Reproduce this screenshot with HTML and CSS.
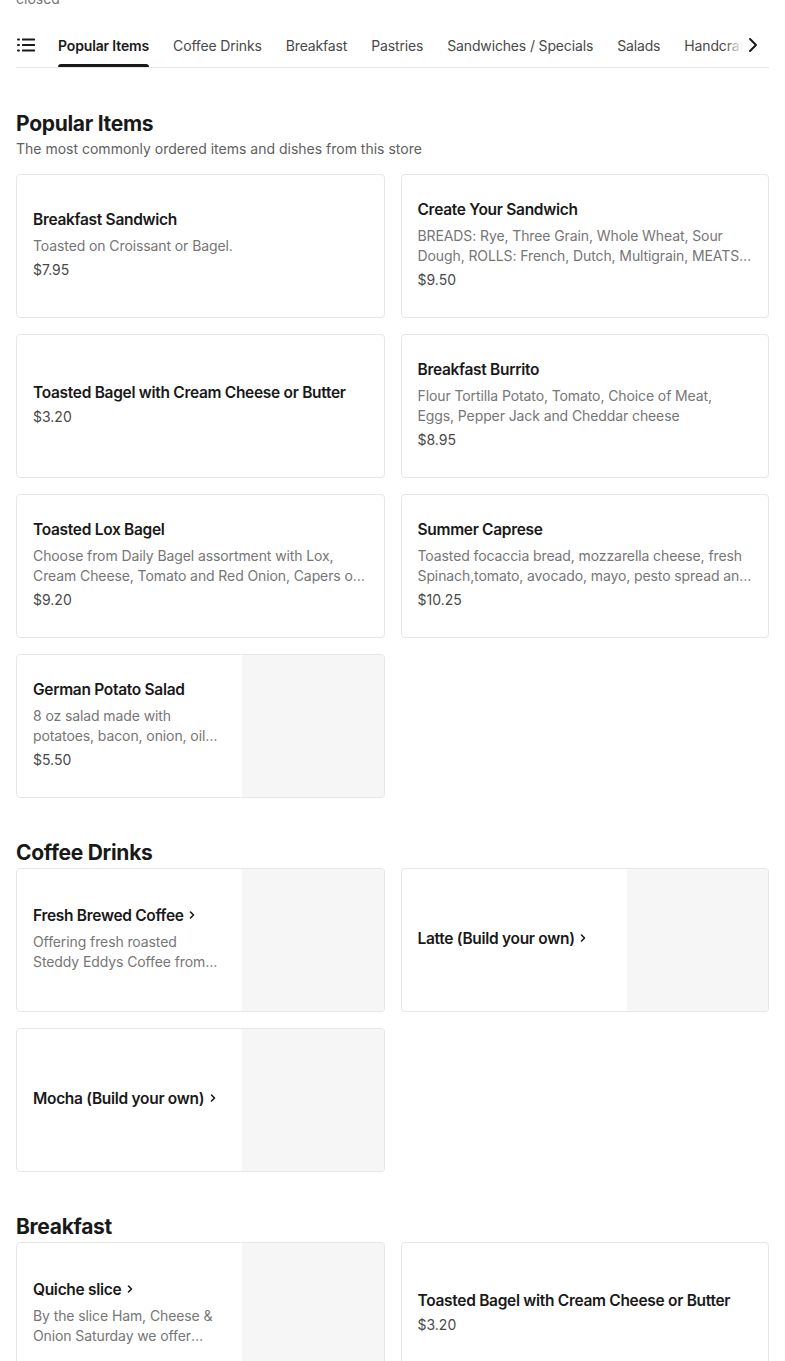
FILE: index.html
```html
<!DOCTYPE html>
<html>
<head>
<meta charset="utf-8">
<link rel="stylesheet" href="styles.css">
</head>
<body>
<div class="page">
  <div class="status">closed</div>
  <nav class="tabbar">
    <span class="menu-icon">
      <svg width="20" height="20" viewBox="0 0 20 20"><g fill="#191919"><rect x="1" y="3.5" width="3" height="2" rx="1"/><rect x="1" y="9" width="3" height="2" rx="1"/><rect x="1" y="14.5" width="3" height="2" rx="1"/><rect x="6" y="3.5" width="13" height="2" rx="0.5"/><rect x="6" y="9" width="13" height="2" rx="0.5"/><rect x="6" y="14.5" width="13" height="2" rx="0.5"/></g></svg>
    </span>
    <div class="tabs">
      <span class="tab active">Popular Items</span>
      <span class="tab">Coffee Drinks</span>
      <span class="tab">Breakfast</span>
      <span class="tab">Pastries</span>
      <span class="tab">Sandwiches / Specials</span>
      <span class="tab">Salads</span>
      <span class="tab">Handcrafted Drinks</span>
    </div>
    <span class="tab-next">
      <svg width="14" height="16" viewBox="0 0 14 16"><path d="M4 2 L10 8 L4 14" fill="none" stroke="#191919" stroke-width="2" stroke-linecap="round" stroke-linejoin="round"/></svg>
    </span>
  </nav>

  <section class="section first">
    <h2 class="section-title">Popular Items</h2>
    <p class="section-sub">The most commonly ordered items and dishes from this store</p>
    <div class="grid">
      <div class="card"><div class="info">
        <div class="title">Breakfast Sandwich</div>
        <div class="desc">Toasted on Croissant or Bagel.</div>
        <div class="price">$7.95</div>
      </div></div>
      <div class="card"><div class="info">
        <div class="title">Create Your Sandwich</div>
        <div class="desc">BREADS: Rye, Three Grain, Whole Wheat, Sour Dough, ROLLS: French, Dutch, Multigrain, MEATS: Turkey, Ham, Roast Beef, Salami</div>
        <div class="price">$9.50</div>
      </div></div>
      <div class="card"><div class="info">
        <div class="title">Toasted Bagel with Cream Cheese or Butter</div>
        <div class="price">$3.20</div>
      </div></div>
      <div class="card"><div class="info">
        <div class="title">Breakfast Burrito</div>
        <div class="desc">Flour Tortilla Potato, Tomato, Choice of Meat, Eggs, Pepper Jack and Cheddar cheese</div>
        <div class="price">$8.95</div>
      </div></div>
      <div class="card"><div class="info">
        <div class="title">Toasted Lox Bagel</div>
        <div class="desc">Choose from Daily Bagel assortment with Lox, Cream Cheese, Tomato and Red Onion, Capers on the side</div>
        <div class="price">$9.20</div>
      </div></div>
      <div class="card"><div class="info">
        <div class="title">Summer Caprese</div>
        <div class="desc">Toasted focaccia bread, mozzarella cheese, fresh Spinach,tomato, avocado, mayo, pesto spread and balsamic glaze</div>
        <div class="price">$10.25</div>
      </div></div>
      <div class="card with-img"><div class="info">
        <div class="title">German Potato Salad</div>
        <div class="desc">8 oz salad made with potatoes, bacon, onion, oil and vinegar</div>
        <div class="price">$5.50</div>
      </div><div class="img"></div></div>
    </div>
  </section>

  <section class="section">
    <h2 class="section-title">Coffee Drinks</h2>
    <div class="grid">
      <div class="card with-img"><div class="info">
        <div class="title">Fresh Brewed Coffee <span class="chev"><svg width="8" height="10" viewBox="0 0 8 10"><path d="M2.5 2 L5.5 5 L2.5 8" fill="none" stroke="#191919" stroke-width="1.6" stroke-linecap="round" stroke-linejoin="round"/></svg></span></div>
        <div class="desc">Offering fresh roasted Steddy Eddys Coffee from Ithaca, NY</div>
      </div><div class="img"></div></div>
      <div class="card with-img"><div class="info">
        <div class="title">Latte (Build your own) <span class="chev"><svg width="8" height="10" viewBox="0 0 8 10"><path d="M2.5 2 L5.5 5 L2.5 8" fill="none" stroke="#191919" stroke-width="1.6" stroke-linecap="round" stroke-linejoin="round"/></svg></span></div>
      </div><div class="img"></div></div>
      <div class="card with-img"><div class="info">
        <div class="title">Mocha (Build your own) <span class="chev"><svg width="8" height="10" viewBox="0 0 8 10"><path d="M2.5 2 L5.5 5 L2.5 8" fill="none" stroke="#191919" stroke-width="1.6" stroke-linecap="round" stroke-linejoin="round"/></svg></span></div>
      </div><div class="img"></div></div>
    </div>
  </section>

  <section class="section">
    <h2 class="section-title">Breakfast</h2>
    <div class="grid">
      <div class="card with-img"><div class="info">
        <div class="title">Quiche slice <span class="chev"><svg width="8" height="10" viewBox="0 0 8 10"><path d="M2.5 2 L5.5 5 L2.5 8" fill="none" stroke="#191919" stroke-width="1.6" stroke-linecap="round" stroke-linejoin="round"/></svg></span></div>
        <div class="desc">By the slice Ham, Cheese &amp; Onion Saturday we offer Spinach and Feta</div>
      </div><div class="img"></div></div>
      <div class="card"><div class="info">
        <div class="title">Toasted Bagel with Cream Cheese or Butter</div>
        <div class="price">$3.20</div>
      </div></div>
    </div>
  </section>
</div>
</body>
</html>
```

FILE: styles.css
```css
* { box-sizing: border-box; }
html, body { margin: 0; padding: 0; background: #fff; }
body {
  font-family: Inter, "Noto Sans", "Liberation Sans", sans-serif;
  color: #191919;
  overflow: hidden;
}
.page { padding: 0 16px; }
.status {
  margin-top: -11px;
  font-size: 14px;
  line-height: 20px;
  color: #767676;
}
.tabbar {
  position: relative;
  display: flex;
  align-items: center;
  height: 45px;
  margin-top: 14px;
  border-bottom: 1px solid #e7e7e7;
}
.menu-icon { display: flex; width: 20px; height: 20px; flex: none; }
.tabs {
  display: flex;
  gap: 24px;
  margin-left: 22px;
  height: 100%;
  overflow: hidden;
  white-space: nowrap;
  flex: 1;
}
.tab {
  position: relative;
  display: flex;
  align-items: center;
  height: 100%;
  font-size: 14px;
  color: #494949;
  letter-spacing: -0.15px;
}
.tab.active { color: #191919; font-weight: 600; }
.tab.active::after {
  content: "";
  position: absolute;
  left: 0; right: 0; bottom: -1px;
  height: 4px;
  background: #191919;
  border-radius: 3px 3px 0 0;
}
.tab-next {
  position: absolute;
  right: 0; top: 0; bottom: 1px;
  width: 44px;
  display: flex;
  align-items: center;
  justify-content: center;
  background: linear-gradient(to right, rgba(255,255,255,0), #fff 40%);
}
.tab-next svg { margin-left: 12px; }

.section { margin-top: 40px; }
.section.first { margin-top: 41px; }
.section-title {
  margin: 0;
  font-size: 21px;
  line-height: 30px;
  font-weight: 700;
  letter-spacing: -0.3px;
}
.section-sub {
  margin: 0 0 15px;
  font-size: 14px;
  line-height: 20px;
  color: #606060;
}
.grid {
  display: grid;
  grid-template-columns: 1fr 1fr;
  gap: 16px;
}
.card {
  display: flex;
  height: 144px;
  border: 1px solid #e7e7e7;
  border-radius: 4px;
  overflow: hidden;
  background: #fff;
}
.info {
  flex: 1;
  min-width: 0;
  padding: 0 16px 2px;
  display: flex;
  flex-direction: column;
  justify-content: center;
}
.with-img .info { flex: none; width: 225px; }
.img { flex: 1; background: #f6f6f6; }
.title {
  font-size: 15.5px;
  line-height: 20px;
  font-weight: 600;
  letter-spacing: -0.3px;
  white-space: nowrap;
}
.chev { display: inline-block; vertical-align: middle; margin-left: 1px; position: relative; top: -1px; }
.desc {
  margin-top: 6px;
  font-size: 14px;
  line-height: 20px;
  color: #767676;
  display: -webkit-box;
  -webkit-box-orient: vertical;
  -webkit-line-clamp: 2;
  overflow: hidden;
  letter-spacing: -0.1px;
}
.price {
  margin-top: 4px;
  font-size: 14px;
  line-height: 20px;
  color: #494949;
}
```
